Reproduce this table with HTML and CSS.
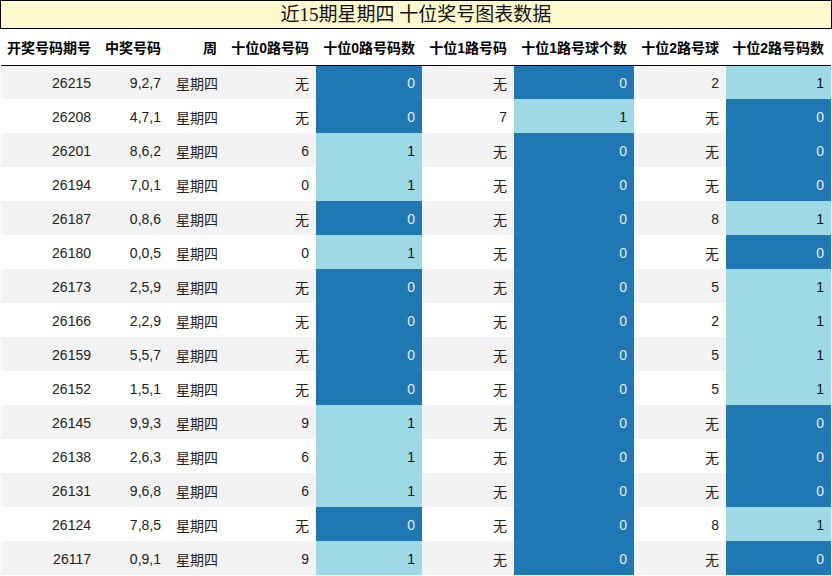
FILE: index.html
```html
<!DOCTYPE html>
<html lang="zh">
<head>
<meta charset="utf-8">
<title>近15期星期四 十位奖号图表数据</title>
<link rel="stylesheet" href="styles.css">
</head>
<body>
<div class="page">
  <div class="title">近15期星期四 十位奖号图表数据</div>
  <table class="data">
    <colgroup>
      <col class="w1"><col class="w2"><col class="w3"><col class="w4"><col class="w5"><col class="w6"><col class="w7"><col class="w8"><col class="w9">
    </colgroup>
    <thead>
      <tr><th>开奖号码期号</th><th>中奖号码</th><th>周</th><th>十位0路号码</th><th>十位0路号码数</th><th>十位1路号码</th><th>十位1路号球个数</th><th>十位2路号球</th><th>十位2路号码数</th></tr>
    </thead>
    <tbody>
      <tr><td>26215</td><td>9,2,7</td><td class="wk">星期四</td><td>无</td><td class="d">0</td><td>无</td><td class="d">0</td><td>2</td><td class="l">1</td></tr>
      <tr><td>26208</td><td>4,7,1</td><td class="wk">星期四</td><td>无</td><td class="d">0</td><td>7</td><td class="l">1</td><td>无</td><td class="d">0</td></tr>
      <tr><td>26201</td><td>8,6,2</td><td class="wk">星期四</td><td>6</td><td class="l">1</td><td>无</td><td class="d">0</td><td>无</td><td class="d">0</td></tr>
      <tr><td>26194</td><td>7,0,1</td><td class="wk">星期四</td><td>0</td><td class="l">1</td><td>无</td><td class="d">0</td><td>无</td><td class="d">0</td></tr>
      <tr><td>26187</td><td>0,8,6</td><td class="wk">星期四</td><td>无</td><td class="d">0</td><td>无</td><td class="d">0</td><td>8</td><td class="l">1</td></tr>
      <tr><td>26180</td><td>0,0,5</td><td class="wk">星期四</td><td>0</td><td class="l">1</td><td>无</td><td class="d">0</td><td>无</td><td class="d">0</td></tr>
      <tr><td>26173</td><td>2,5,9</td><td class="wk">星期四</td><td>无</td><td class="d">0</td><td>无</td><td class="d">0</td><td>5</td><td class="l">1</td></tr>
      <tr><td>26166</td><td>2,2,9</td><td class="wk">星期四</td><td>无</td><td class="d">0</td><td>无</td><td class="d">0</td><td>2</td><td class="l">1</td></tr>
      <tr><td>26159</td><td>5,5,7</td><td class="wk">星期四</td><td>无</td><td class="d">0</td><td>无</td><td class="d">0</td><td>5</td><td class="l">1</td></tr>
      <tr><td>26152</td><td>1,5,1</td><td class="wk">星期四</td><td>无</td><td class="d">0</td><td>无</td><td class="d">0</td><td>5</td><td class="l">1</td></tr>
      <tr><td>26145</td><td>9,9,3</td><td class="wk">星期四</td><td>9</td><td class="l">1</td><td>无</td><td class="d">0</td><td>无</td><td class="d">0</td></tr>
      <tr><td>26138</td><td>2,6,3</td><td class="wk">星期四</td><td>6</td><td class="l">1</td><td>无</td><td class="d">0</td><td>无</td><td class="d">0</td></tr>
      <tr><td>26131</td><td>9,6,8</td><td class="wk">星期四</td><td>6</td><td class="l">1</td><td>无</td><td class="d">0</td><td>无</td><td class="d">0</td></tr>
      <tr><td>26124</td><td>7,8,5</td><td class="wk">星期四</td><td>无</td><td class="d">0</td><td>无</td><td class="d">0</td><td>8</td><td class="l">1</td></tr>
      <tr><td>26117</td><td>0,9,1</td><td class="wk">星期四</td><td>9</td><td class="l">1</td><td>无</td><td class="d">0</td><td>无</td><td class="d">0</td></tr>
    </tbody>
  </table>
</div>
</body>
</html>
```
FILE: styles.css
```css
html, body {
  margin: 0;
  padding: 0;
  background: #ffffff;
}
.page {
  width: 832px;
  height: 576px;
  overflow: hidden;
}
.title {
  box-sizing: border-box;
  height: 29px;
  border: 1px solid #000;
  background: #fffacd;
  font-family: "Liberation Serif", "Noto Sans CJK SC", serif;
  font-size: 19px;
  line-height: 28px;
  text-align: center;
  color: #111;
}
.data {
  margin-left: 1px;
  width: 830px;
  table-layout: fixed;
  border-collapse: collapse;
  font-family: "Liberation Sans", "Noto Sans CJK SC", sans-serif;
  font-size: 14px;
  color: #222;
}
.w1 { width: 97px; }
.w2 { width: 70px; }
.w3 { width: 56px; }
.w4 { width: 92px; }
.w5 { width: 106px; }
.w6 { width: 92px; }
.w7 { width: 120px; }
.w8 { width: 92px; }
.w9 { width: 105px; }
.data th {
  height: 36px;
  padding: 0 7px 0 0;
  text-align: right;
  font-weight: bold;
  color: #000;
  border-bottom: 1px solid #000;
  white-space: nowrap;
  box-sizing: border-box;
}
.data td {
  height: 34px;
  padding: 1px 7px 0 0;
  text-align: right;
  white-space: nowrap;
  box-sizing: border-box;
}
.data td.wk {
  text-align: left;
  padding: 1px 0 0 8px;
}
.data tbody tr:nth-child(odd) { background: #f3f3f3; }
.data tbody tr:nth-child(even) { background: #ffffff; }
.data td.d { background: #1f77b4; color: #e8eef4; }
.data td.l { background: #9edae5; color: #111; }
```
